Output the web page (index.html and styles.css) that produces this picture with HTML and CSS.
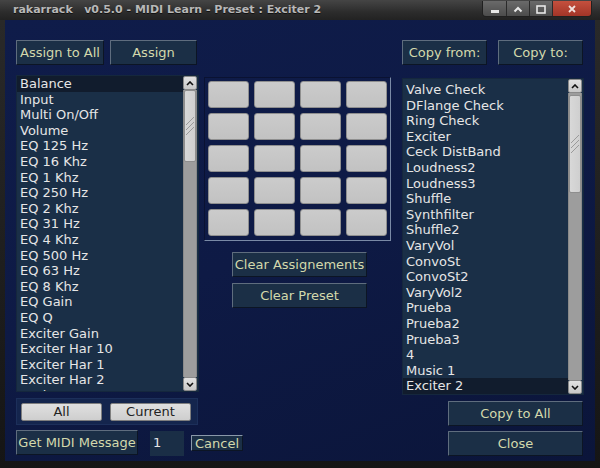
FILE: index.html
```html
<!DOCTYPE html>
<html>
<head>
<meta charset="utf-8">
<title>rakarrack MIDI Learn</title>
<link rel="stylesheet" href="styles.css">
</head>
<body>
<div class="window">
  <div class="titlebar">
    <span class="title">rakarrack   v0.5.0 - MIDI Learn - Preset : Exciter 2</span>
    <div class="wm">
      <span class="wm-btn"><svg width="10" height="8" viewBox="0 0 10 8"><rect x="1" y="5" width="8" height="3" fill="#e8e8e8"/></svg></span>
      <span class="wm-btn"><svg width="10" height="8" viewBox="0 0 10 8"><path d="M1.5 6.5 L5 3 L8.5 6.5" stroke="#e8e8e8" stroke-width="2" fill="none"/></svg></span>
      <span class="wm-btn"><svg width="10" height="9" viewBox="0 0 10 9"><rect x="1" y="1" width="8" height="7" stroke="#e8e8e8" stroke-width="1.6" fill="none"/></svg></span>
      <span class="wm-btn wm-close"><svg width="10" height="8" viewBox="0 0 10 8"><path d="M2 1 L8 7 M8 1 L2 7" stroke="#f0e0dc" stroke-width="1.8"/></svg></span>
    </div>
  </div>
  <div class="client">
    <div class="layout">
      <!-- row 1 -->
      <div class="row1 left-top">
        <button class="btn dark w88">Assign to All</button>
        <button class="btn dark w87">Assign</button>
      </div>
      <div></div>
      <div class="row1 right-top">
        <button class="btn dark w85">Copy from:</button>
        <button class="btn dark w85">Copy to:</button>
      </div>

      <!-- row 2 -->
      <div class="list left-list">
        <div class="items">
          <div class="item sel">Balance</div>
          <div class="item">Input</div>
          <div class="item">Multi On/Off</div>
          <div class="item">Volume</div>
          <div class="item">EQ 125 Hz</div>
          <div class="item">EQ 16 Khz</div>
          <div class="item">EQ 1 Khz</div>
          <div class="item">EQ 250 Hz</div>
          <div class="item">EQ 2 Khz</div>
          <div class="item">EQ 31 Hz</div>
          <div class="item">EQ 4 Khz</div>
          <div class="item">EQ 500 Hz</div>
          <div class="item">EQ 63 Hz</div>
          <div class="item">EQ 8 Khz</div>
          <div class="item">EQ Gain</div>
          <div class="item">EQ Q</div>
          <div class="item">Exciter Gain</div>
          <div class="item">Exciter Har 10</div>
          <div class="item">Exciter Har 1</div>
          <div class="item">Exciter Har 2</div>
          <div class="item">Exciter Har 3</div>
        </div>
        <div class="sbar">
          <div class="sb-arrow"><svg width="8" height="5" viewBox="0 0 8 5"><path d="M1 4 L4 1 L7 4" stroke="#111" stroke-width="1.6" fill="none"/></svg></div>
          <div class="sb-track">
            <div class="sb-thumb thumb-left"><svg width="10" height="20" viewBox="0 0 10 20"><path d="M1 9 L9 1 M1 14 L9 6 M1 19 L9 11" stroke="#9a9a9a" stroke-width="1"/></svg></div>
          </div>
          <div class="sb-arrow"><svg width="8" height="5" viewBox="0 0 8 5"><path d="M1 1 L4 4 L7 1" stroke="#111" stroke-width="1.6" fill="none"/></svg></div>
        </div>
      </div>

      <div class="middle">
        <div class="pad-panel">
          <div class="cell"></div><div class="cell"></div><div class="cell"></div><div class="cell"></div>
          <div class="cell"></div><div class="cell"></div><div class="cell"></div><div class="cell"></div>
          <div class="cell"></div><div class="cell"></div><div class="cell"></div><div class="cell"></div>
          <div class="cell"></div><div class="cell"></div><div class="cell"></div><div class="cell"></div>
          <div class="cell"></div><div class="cell"></div><div class="cell"></div><div class="cell"></div>
        </div>
        <button class="btn dark clear clear1">Clear Assignements</button>
        <button class="btn dark clear clear2">Clear Preset</button>
      </div>

      <div class="list right-list">
        <div class="items">
          <div class="item">Valve Check</div>
          <div class="item">DFlange Check</div>
          <div class="item">Ring Check</div>
          <div class="item">Exciter</div>
          <div class="item">Ceck DistBand</div>
          <div class="item">Loudness2</div>
          <div class="item">Loudness3</div>
          <div class="item">Shuffle</div>
          <div class="item">Synthfilter</div>
          <div class="item">Shuffle2</div>
          <div class="item">VaryVol</div>
          <div class="item">ConvoSt</div>
          <div class="item">ConvoSt2</div>
          <div class="item">VaryVol2</div>
          <div class="item">Prueba</div>
          <div class="item">Prueba2</div>
          <div class="item">Prueba3</div>
          <div class="item">4</div>
          <div class="item">Music 1</div>
          <div class="item sel">Exciter 2</div>
        </div>
        <div class="sbar">
          <div class="sb-arrow"><svg width="8" height="5" viewBox="0 0 8 5"><path d="M1 4 L4 1 L7 4" stroke="#111" stroke-width="1.6" fill="none"/></svg></div>
          <div class="sb-track">
            <div class="sb-thumb thumb-right"><svg width="10" height="20" viewBox="0 0 10 20"><path d="M1 9 L9 1 M1 14 L9 6 M1 19 L9 11" stroke="#9a9a9a" stroke-width="1"/></svg></div>
          </div>
          <div class="sb-arrow"><svg width="8" height="5" viewBox="0 0 8 5"><path d="M1 1 L4 4 L7 1" stroke="#111" stroke-width="1.6" fill="none"/></svg></div>
        </div>
      </div>

      <!-- row 3 -->
      <div class="group">
        <button class="btn light">All</button>
        <button class="btn light">Current</button>
      </div>
      <div></div>
      <div class="right-btn r3">
        <button class="btn dark w135 copyall">Copy to All</button>
      </div>

      <!-- row 4 -->
      <div class="bottom-left">
        <button class="btn dark getmidi">Get MIDI Message</button>
        <div class="num">1</div>
        <button class="btn dark cancel">Cancel</button>
      </div>
      <div class="right-btn r4">
        <button class="btn dark w135 close">Close</button>
      </div>
    </div>
  </div>
</div>
</body>
</html>
```

FILE: styles.css
```css
* { box-sizing: border-box; }
html, body { margin: 0; padding: 0; }
body {
  width: 600px;
  height: 468px;
  overflow: hidden;
  background: #1c1c1c;
  font-family: "DejaVu Sans", "Liberation Sans", sans-serif;
  font-size: 13px;
}
.window {
  width: 600px;
  height: 468px;
  display: flex;
  flex-direction: column;
  background: linear-gradient(#2a2a2a, #151515);
}
.titlebar {
  height: 20px;
  flex: none;
  display: flex;
  align-items: flex-start;
  justify-content: space-between;
  background: linear-gradient(#454545, #2c2c2c 60%, #222);
}
.title {
  white-space: pre;
  font-weight: bold;
  font-size: 11px;
  color: #b8b8b8;
  padding-left: 13px;
  line-height: 20px;
  text-shadow: 0 1px 0 #111;
}
.wm {
  display: flex;
  margin: 1px 8px 0 0;
  height: 16px;
  border: 1px solid #202020;
  border-top: none;
  border-radius: 0 0 4px 4px;
  overflow: hidden;
}
.wm-btn {
  width: 23px;
  height: 16px;
  display: flex;
  align-items: center;
  justify-content: center;
  background: linear-gradient(#6a6a6a, #4a4a4a);
  border-left: 1px solid #2a2a2a;
}
.wm-btn:first-child { border-left: none; }
.wm-close {
  width: 39px;
  background: linear-gradient(#c4503e, #a03326);
}
.client {
  flex: 1;
  margin: 0 5px 7px 5px;
  background: linear-gradient(160deg, #0f1c4a, #0e1a45 50%, #0b153a);
  padding: 20px 0 0 11px;
}
.layout {
  display: grid;
  grid-template-columns: 183px 187px 188px;
  column-gap: 5px;
  grid-template-rows: 25px 333px 32px 26px;
}
.layout > .list.right-list, .layout > .right-top, .layout > .right-btn {
  margin-left: 6px;
}
.row1 { display: flex; }
.left-top { gap: 6px; }
.right-top { gap: 11px; }

.btn {
  font-family: "DejaVu Sans", "Liberation Sans", sans-serif;
  font-size: 13px;
  padding: 0;
  margin: 0;
  cursor: default;
}
.btn.dark {
  height: 25px;
  background: #1b2f46;
  color: #d3d9ac;
  border: 1px solid;
  border-color: #5f6d7e #0c1524 #0c1524 #5f6d7e;
  border-radius: 1px;
}
.w88 { width: 88px; }
.w87 { width: 87px; }
.w85 { width: 85px; }
.w135 { width: 135px; }

.list {
  display: flex;
  background: #1a2f47;
  border: 1px solid #15273d;
  overflow: hidden;
}
.left-list { margin-top: 10px; height: 317px; }
.right-list { margin-top: 13px; height: 317px; }
.items {
  flex: 1;
  overflow: hidden;
  color: #e6e6e6;
}
.right-list .items { padding-top: 3px; }
.item {
  height: 15.6px;
  line-height: 15.6px;
  padding-left: 3px;
  white-space: nowrap;
}
.item.sel { background: #111c2d; }
.sbar {
  width: 14px;
  flex: none;
  margin: 0 1px 0 0;
  display: flex;
  flex-direction: column;
}
.sb-arrow {
  height: 14px;
  flex: none;
  display: flex;
  align-items: center;
  justify-content: center;
  background: linear-gradient(#e2e2e2, #c8c8c8);
  border: 1px solid #8a8a8a;
  border-radius: 2px;
}
.sb-track {
  flex: 1;
  background: #9d9d9d;
  border-left: 1px solid #8a8a8a;
  border-right: 1px solid #8a8a8a;
}
.sb-thumb {
  background: linear-gradient(90deg, #d8d8d8, #cfcfcf);
  border: 1px solid #8e8e8e;
  border-radius: 2px;
  display: flex;
  align-items: center;
  justify-content: center;
}
.thumb-left { height: 72px; margin-top: 0; }
.thumb-right { height: 98px; margin-top: 2px; }

.middle {
  display: flex;
  flex-direction: column;
}
.pad-panel {
  margin-top: 12px;
  height: 164px;
  display: grid;
  grid-template-columns: repeat(4, 41px);
  grid-auto-rows: 27px;
  column-gap: 5px;
  row-gap: 5px;
  padding: 3px 3px 3px 3px;
  border: 1px solid;
  border-color: #0a1232 #7a8aa6 #7a8aa6 #0a1232;
}
.cell {
  background: linear-gradient(#cbcbcb, #c2c2c2);
  border: 1px solid #8f8f8f;
  border-radius: 3px;
}
.clear {
  width: 135px;
  margin-left: 28px;
}
.clear1 { margin-top: 11px; height: 25px; }
.clear2 { margin-top: 6px; height: 26px; }

.group {
  margin-top: 0;
  height: 27px;
  width: 182px;
  background: #14254d;
  border: 1px solid #1c2f5a;
  display: flex;
  align-items: center;
  gap: 8px;
  padding-left: 4px;
}
.btn.light {
  width: 81px;
  height: 18px;
  background: linear-gradient(#e0e0e0, #cecece);
  color: #222;
  border: 1px solid #7e7e7e;
  border-radius: 2px;
  line-height: 14px;
}
.right-btn { display: flex; justify-content: flex-end; }
.r3 { grid-column: 3; margin-top: 3px; }
.copyall { height: 24px; margin-right: 1px; }
.r4 { margin-top: 1px; }
.close { height: 25px; margin-right: 1px; }
.bottom-left {
  grid-column: 1 / span 2;
  display: flex;
  align-items: flex-start;
}
.getmidi { width: 122px; height: 26px; }
.num {
  margin-left: 12px;
  margin-top: 1px;
  width: 34px;
  height: 25px;
  background: #1a2e46;
  color: #e6e6e6;
  line-height: 24px;
  padding-left: 3px;
}
.cancel {
  margin-left: 7px;
  margin-top: 5px;
  width: 52px;
  height: 16px !important;
  line-height: 13px;
  border-color: #8a98aa #0c1524 #0c1524 #8a98aa !important;
}
```
